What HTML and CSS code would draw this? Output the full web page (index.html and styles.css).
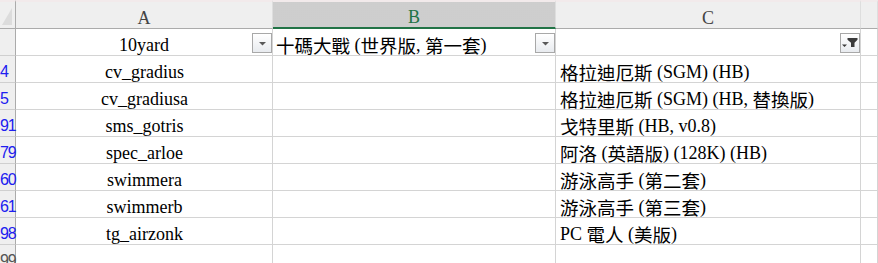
FILE: index.html
```html
<!DOCTYPE html>
<html>
<head>
<meta charset="utf-8">
<title>Sheet</title>
<link rel="stylesheet" href="styles.css">
</head>
<body>
<div class="sheet">
  <div class="ch corner"><span class="tri"></span></div>
  <div class="ch">A</div>
  <div class="ch sel">B</div>
  <div class="ch">C</div>
  <div class="ch"></div>

  <div class="rh"></div>
  <div class="c ctr hdr">10yard<span class="fbtn"><svg viewBox="0 0 20 20" width="20" height="20"><polygon points="7,9 14,9 10.5,12.5" fill="#595959"/></svg></span></div>
  <div class="c hdr"><span class="cjk">十碼大戰</span> (<span class="cjk">世界版</span>, <span class="cjk">第一套</span>)<span class="fbtn"><svg viewBox="0 0 20 20" width="20" height="20"><polygon points="7,9 14,9 10.5,12.5" fill="#595959"/></svg></span></div>
  <div class="c hdr"><span class="fbtn"><svg viewBox="0 0 20 20" width="20" height="20"><polygon points="7.5,5 17.5,5 17.5,6.8 14.5,9.8 14.5,14 11,14 11,9.8 7.5,6.8" fill="#3a3a3a"/><polygon points="2,11.5 7,11.5 4.5,14" fill="#3a3a3a"/></svg></span></div>
  <div class="c"></div>

  <div class="rh"><span class="num">4</span></div>
  <div class="c ctr">cv_gradius</div>
  <div class="c"></div>
  <div class="c"><span class="cjk">格拉迪厄斯</span> (SGM) (HB)</div>
  <div class="c"></div>

  <div class="rh"><span class="num">5</span></div>
  <div class="c ctr">cv_gradiusa</div>
  <div class="c"></div>
  <div class="c"><span class="cjk">格拉迪厄斯</span> (SGM) (HB, <span class="cjk">替換版</span>)</div>
  <div class="c"></div>

  <div class="rh"><span class="num">91</span></div>
  <div class="c ctr">sms_gotris</div>
  <div class="c"></div>
  <div class="c"><span class="cjk">戈特里斯</span> (HB, v0.8)</div>
  <div class="c"></div>

  <div class="rh"><span class="num">79</span></div>
  <div class="c ctr">spec_arloe</div>
  <div class="c"></div>
  <div class="c"><span class="cjk">阿洛</span> (<span class="cjk">英語版</span>) (128K) (HB)</div>
  <div class="c"></div>

  <div class="rh"><span class="num">60</span></div>
  <div class="c ctr">swimmera</div>
  <div class="c"></div>
  <div class="c"><span class="cjk">游泳高手</span> (<span class="cjk">第二套</span>)</div>
  <div class="c"></div>

  <div class="rh"><span class="num">61</span></div>
  <div class="c ctr">swimmerb</div>
  <div class="c"></div>
  <div class="c"><span class="cjk">游泳高手</span> (<span class="cjk">第三套</span>)</div>
  <div class="c"></div>

  <div class="rh"><span class="num">98</span></div>
  <div class="c ctr">tg_airzonk</div>
  <div class="c"></div>
  <div class="c">PC <span class="cjk">電人</span> (<span class="cjk">美版</span>)</div>
  <div class="c"></div>

  <div class="rh"><span class="num plain">99</span></div>
  <div class="c"></div>
  <div class="c"></div>
  <div class="c"></div>
  <div class="c"></div>
</div>
</body>
</html>
```

FILE: styles.css
```css
html, body {
  margin: 0;
  padding: 0;
  background: #ffffff;
  overflow: hidden;
}

.sheet {
  display: grid;
  grid-template-columns: 16px 257px 283px 305px 1fr;
  grid-template-rows: 29px repeat(8, 27px) 27px;
  width: 878px;
  font-family: "Liberation Serif", "Times New Roman", serif;
  font-size: 18px;
  color: #000;
}

.cjk {
  font-family: "Noto Sans CJK TC", "Noto Sans CJK SC", sans-serif;
  font-size: 18.5px;
}

.ch {
  box-sizing: border-box;
  background: #efefef;
  border-top: 2px solid #f2eaeb;
  border-right: 1px solid #dedede;
  border-bottom: 1px solid #ababab;
  display: flex;
  align-items: flex-end;
  justify-content: center;
  line-height: 20px;
  color: #444444;
}

.ch.sel {
  background-color: #d4d4d4;
  background-image: radial-gradient(#c6c6c6 0.6px, transparent 0.8px);
  background-size: 2px 2px;
  border-bottom: 2px solid #217346;
  color: #217346;
}

.ch.corner {
  border-right: 1px solid #ababab;
  position: relative;
}

.tri {
  position: absolute;
  right: 3px;
  bottom: 3px;
  width: 0;
  height: 0;
  border-left: 10px solid transparent;
  border-bottom: 17px solid #dcdcdc;
}

.rh {
  box-sizing: border-box;
  background: #efefef;
  border-right: 1px solid #ababab;
  border-bottom: 1px solid #cfcfcf;
  display: flex;
  align-items: flex-end;
  justify-content: flex-start;
  line-height: 20px;
}

.num {
  font-family: "Liberation Sans", Arial, sans-serif;
  color: #2020f0;
  font-size: 16px;
  letter-spacing: -1.2px;
  white-space: nowrap;
}

.num.plain {
  color: #555555;
}

.c {
  box-sizing: border-box;
  border-right: 1px solid #d4d4d4;
  border-bottom: 1px solid #d4d4d4;
  display: flex;
  align-items: flex-end;
  line-height: 20px;
  padding: 0 3px 0 4px;
  white-space: pre;
  position: relative;
}

.c.ctr {
  justify-content: center;
}

.c.hdr {
  padding-left: 3px;
}

.fbtn {
  position: absolute;
  right: 0;
  top: 4px;
  width: 20px;
  height: 20px;
  box-sizing: border-box;
  border: 1px solid #a8a8a8;
  background: linear-gradient(#ffffff, #e8ebef);
  display: flex;
  align-items: center;
  justify-content: center;
}

.fbtn svg {
  display: block;
  flex: 0 0 auto;
  margin: -1px;
}
```
